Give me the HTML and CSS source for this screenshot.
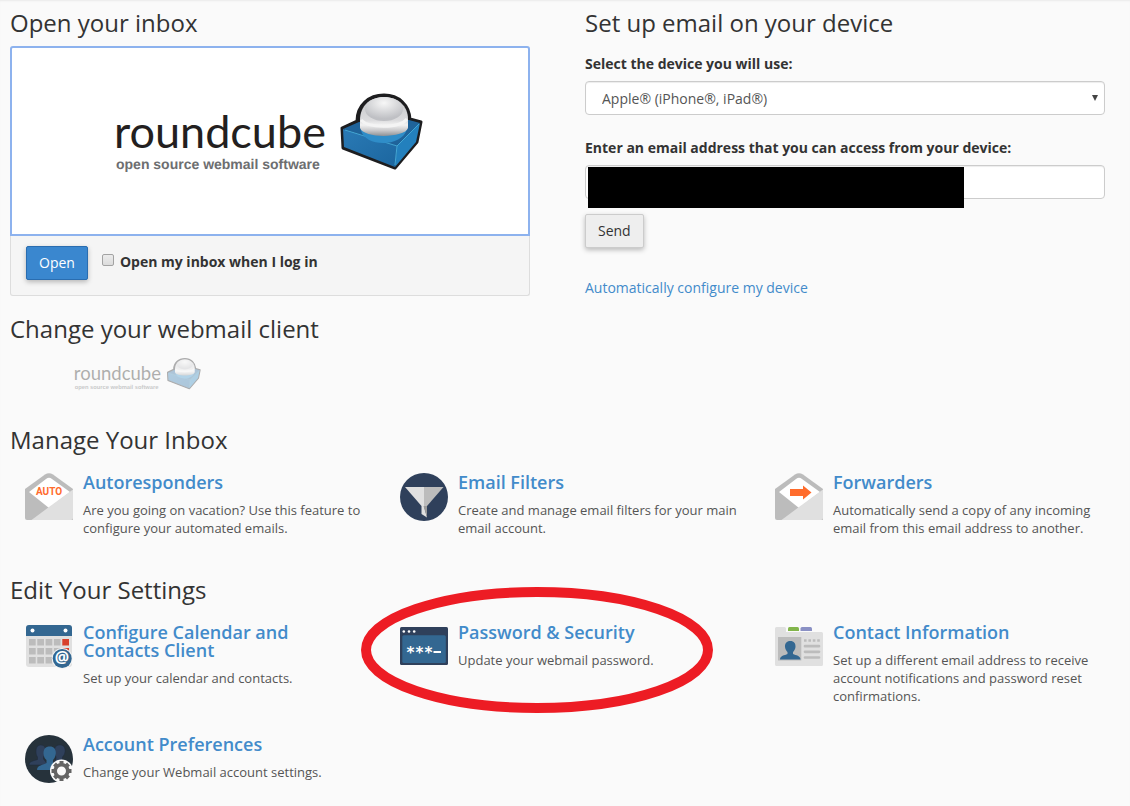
FILE: index.html
```html
<!DOCTYPE html>
<html lang="en">
<head>
    <meta charset="utf-8">
    <title>Webmail</title>
    <link rel="stylesheet" href="styles.css">
</head>
<body>

<div class="page">
    <div class="top">
        <section>
            <h2>Open your inbox</h2>
            <div class="client">
                <button class="client-logo" type="button" aria-label="Roundcube">
                    <svg width="320" height="90" viewBox="0 0 320 90">
                        <defs>
                            <linearGradient id="ballShade" x1="0" y1="0" x2="0" y2="1">
                                <stop offset="0" stop-color="#c4c5c7"/>
                                <stop offset="0.6" stop-color="#dcdcde"/>
                                <stop offset="0.72" stop-color="#f2f2f2"/>
                                <stop offset="0.86" stop-color="#c9c9cb"/>
                                <stop offset="1" stop-color="#8f9296"/>
                            </linearGradient>
                            <radialGradient id="ballTop" cx="0.5" cy="0.25" r="0.65">
                                <stop offset="0" stop-color="#f7f7f7"/>
                                <stop offset="1" stop-color="#bfc0c4"/>
                            </radialGradient>
                            <linearGradient id="cubeSide" x1="0" y1="0" x2="1" y2="1">
                                <stop offset="0" stop-color="#2a7ab5"/>
                                <stop offset="1" stop-color="#1c669f"/>
                            </linearGradient>
                        </defs>
                        <g id="roundcube">
                            <text class="logo-name" x="4" y="62">roundcube</text>
                            <text class="logo-tagline" x="6" y="83">open source webmail software</text>
                            <path d="M232 42L247 35C247 19 259 9 274 9S299 19 300 33L311 36L307 56L285 82L233 62Z" fill="#1d1d1f" stroke="#1d1d1f" stroke-width="3" stroke-linejoin="round"/>
                            <path d="M233 43L249 36L299 34L310 37L287 60Z" fill="#1f639a"/>
                            <path d="M233 43L287 60L285 81L234 61Z" fill="url(#cubeSide)"/>
                            <path d="M287 60L310 37L306 56L285 81Z" fill="#2380bd"/>
                            <path d="M235 44L287 60L309 38M287 60L285 79" fill="none" stroke="#43a6d4" stroke-width="1"/>
                            <path d="M251 44C254 61 292 62 297 43Z" fill="#2f8dc8"/>
                            <path d="M250 34C250 20 260 11 274 11S298 20 298 33L298 42C295 52 254 53 250 42Z" fill="url(#ballShade)"/>
                            <ellipse cx="274" cy="23" rx="19" ry="12" fill="url(#ballTop)"/>
                            <path d="M251 34C258 42 289 43 297 33" fill="none" stroke="#f4f4f4" stroke-width="3"/>
                        </g>
                    </svg>
                </button>
                <div class="client-actions">
                    <button class="btn btn-primary" type="button">Open</button>
                    <input type="checkbox" id="autoOpen">
                    <label for="autoOpen">Open my inbox when I log in</label>
                </div>
            </div>

            <h2>Change your webmail client</h2>
            <div class="client-choice">
                <svg width="132" height="37" viewBox="0 0 320 90"><use href="#roundcube"/></svg>
            </div>
        </section>

        <section>
            <h2>Set up email on your device</h2>
            <form class="device-form">
                <label for="device">Select the device you will use:</label>
                <div class="select-wrap">
                    <select id="device">
                        <option>Apple® (iPhone®, iPad®)</option>
                    </select>
                </div>
                <label for="email">Enter an email address that you can access from your device:</label>
                <div class="email-wrap">
                    <input type="text" id="email">
                    <span class="redacted"></span>
                </div>
                <button class="btn" type="button">Send</button>
            </form>
            <a href="#">Automatically configure my device</a>
        </section>
    </div>

    <h2>Manage Your Inbox</h2>
    <div class="items">
        <div class="item">
            <svg class="icon" viewBox="0 0 48 48">
                <path d="M0 16L20 1.500Q24 -1 28 1.500L48 16V47H2Q0 47 0 45Z" fill="#bcbcbc"/>
                <path d="M4 19L21 6Q24 3.500 27 6L45 19L24 35Z" fill="#fff"/>
                <path d="M48 16.500V45Q48 47 46 47H6.500L24 34Z" fill="#e0e0e0"/>
                <text class="icon-auto" x="24" y="22" text-anchor="middle">AUTO</text>
            </svg>
            <div>
                <h3><a href="#">Autoresponders</a></h3>
                <p>Are you going on vacation? Use this feature to configure your automated emails.</p>
            </div>
        </div>
        <div class="item">
            <svg class="icon" viewBox="0 0 48 48">
                <circle cx="24" cy="24" r="24" fill="#2f405b"/>
                <path d="M5 14H24V33H21.500Z" fill="#e0e0e0"/>
                <path d="M43.500 14H24V33H27Z" fill="#bcbcbc"/>
                <path d="M21.500 33H24L27 44.500L21.500 41Z" fill="#e0e0e0"/>
                <path d="M23.500 33H27V44.500Z" fill="#9a9a9a"/>
            </svg>
            <div>
                <h3><a href="#">Email Filters</a></h3>
                <p>Create and manage email filters for your main email account.</p>
            </div>
        </div>
        <div class="item">
            <svg class="icon" viewBox="0 0 48 48">
                <path d="M0 16L20 1.500Q24 -1 28 1.500L48 16V47H2Q0 47 0 45Z" fill="#bcbcbc"/>
                <path d="M4 19L21 6Q24 3.500 27 6L45 19L24 35Z" fill="#fff"/>
                <path d="M48 16.500V45Q48 47 46 47H6.500L24 34Z" fill="#e0e0e0"/>
                <path d="M15 16H28V12.500L36.500 19.500L28 26.500V23H15Z" fill="#ff6c2c"/>
            </svg>
            <div>
                <h3><a href="#">Forwarders</a></h3>
                <p>Automatically send a copy of any incoming email from this email address to another.</p>
            </div>
        </div>
    </div>

    <h2>Edit Your Settings</h2>
    <div class="items">
        <div class="item">
            <svg class="icon" viewBox="0 0 48 48">
                <rect x="1" y="2" width="46" height="42" rx="3" fill="#e0e0e0"/>
                <path d="M1 13V5Q1 2 4 2H44Q47 2 47 5V13Z" fill="#336791"/>
                <circle cx="7.500" cy="7.500" r="2" fill="#fff"/>
                <circle cx="40.500" cy="7.500" r="2" fill="#fff"/>
                <path d="M4 19.300H36M4 28.300H36M4 37.300H36" stroke="#bcbcbc" stroke-width="6.500" stroke-dasharray="6.700 1.600"/>
                <path d="M37.300 16H44V22.500H37.300ZM37.300 25H44V31H37.300Z" fill="#d8402c"/>
                <circle cx="37.200" cy="35.500" r="10.500" fill="#f4f4f4"/>
                <circle cx="37.200" cy="35.500" r="9.500" fill="#336791"/>
                <text class="icon-at" x="37" y="40" text-anchor="middle">@</text>
            </svg>
            <div>
                <h3><a href="#">Configure Calendar and Contacts Client</a></h3>
                <p>Set up your calendar and contacts.</p>
            </div>
        </div>
        <div class="item">
            <svg class="icon" viewBox="0 0 48 48">
                <rect y="4" width="48" height="38" rx="1.500" fill="#2f405b"/>
                <rect x="2.300" y="12.300" width="43.500" height="27.700" rx="1.500" fill="#336791"/>
                <g fill="#fff">
                    <circle cx="3.800" cy="8.500" r="1.300"/>
                    <circle cx="9" cy="8.500" r="1.300"/>
                    <circle cx="14.200" cy="8.500" r="1.300"/>
                    <rect x="33.500" y="28" width="7.500" height="2"/>
                </g>
                <text class="icon-stars" x="6" y="35">***</text>
            </svg>
            <div>
                <h3><a href="#">Password &amp; Security</a></h3>
                <p>Update your webmail password.</p>
            </div>
            <svg class="highlight" width="352" height="126">
                <ellipse cx="176" cy="63" rx="171" ry="58" fill="none" stroke="#ed1c24" stroke-width="10"/>
            </svg>
        </div>
        <div class="item">
            <svg class="icon" viewBox="0 0 48 48">
                <path d="M13 8V5.500Q13 4 14.500 4H22.500Q24 4 24 5.500V8Z" fill="#82b54b"/>
                <path d="M25.500 8V5.500Q25.500 4 27 4H35.500Q37 4 37 5.500V8Z" fill="#8a90c4"/>
                <path d="M0 5.500Q0 4 1.500 4H9.500Q11 4 11 5.500V9H46.500Q48 9 48 10.500V41.500Q48 43 46.500 43H1.500Q0 43 0 41.500Z" fill="#e0e0e0"/>
                <rect x="3" y="14" width="23.300" height="23.500" fill="#bcbcbc"/>
                <path d="M15.300 18C19 18 20.800 20.500 20.500 24C20.200 26.500 19 28 18 29V31C21 32.500 25.500 32.500 25.500 36.500H5C5 32.500 9.500 32.500 12.500 31V29C11.500 28 10.300 26.500 10 24C9.800 20.500 11.600 18 15.300 18Z" fill="#336791"/>
                <path d="M29 17.500H45" stroke="#bcbcbc" stroke-width="2.700" stroke-dasharray="2.600 1.800"/>
                <path d="M30 23.200H44M30 28.800H44M30 34.500H44" stroke="#bcbcbc" stroke-width="2.700" stroke-linecap="round"/>
            </svg>
            <div>
                <h3><a href="#">Contact Information</a></h3>
                <p>Set up a different email address to receive account notifications and password reset confirmations.</p>
            </div>
        </div>
        <div class="item">
            <svg class="icon" viewBox="0 0 48 48">
                <circle cx="24" cy="24" r="24" fill="#26323b"/>
                <g fill="#2f405b" stroke="#1e2b3b" stroke-width="0.500">
                    <path d="M16 10C20 10 21 14 20.500 17C20 20 19 21 18.500 22V24L23 30H4C4 26 9 26 12.500 24.500V22C11 20 11 18 11 16C11 12 13 10 16 10Z"/>
                    <path d="M35 10C39 10 40.500 13 40 17C39.700 20 38 21 37.500 22V24.500C40 26 44 26 44 30H27L31 24V22C30 20 29.500 18 29.500 16C29.500 12 31 10 35 10Z"/>
                </g>
                <path d="M24.800 11.500C29 11.500 31 14.500 30.800 18.500C30.500 22 29 24 28 25V28C31 30 37 30 37 35H12C12 30 18.500 30 21.500 28V25C20 24 18.800 22 18.500 18.500C18.500 14 20.500 11.500 24.800 11.500Z" fill="#336791"/>
                <circle cx="36.500" cy="36" r="11.500" fill="#fafafa"/>
                <circle cx="36.500" cy="36" r="6.300" fill="none" stroke="#646464" stroke-width="3.600"/>
                <g stroke="#646464" stroke-width="4">
                    <path d="M36.500 26V29.500M36.500 42.500V46M26.500 36H30M43 36H46.500"/>
                    <path d="M29.500 29L32 31.500M41 40.500L43.500 43M43.500 29L41 31.500M32 40.500L29.500 43"/>
                </g>
            </svg>
            <div>
                <h3><a href="#">Account Preferences</a></h3>
                <p>Change your Webmail account settings.</p>
            </div>
        </div>
    </div>
</div>

</body>
</html>
```

FILE: styles.css
```css
* {
    box-sizing: border-box;
}
body {
    margin: 0;
    font-family: "Open Sans", sans-serif;
    font-size: 14px;
    line-height: 20px;
    color: #333;
    background-color: #fafafa;
    box-shadow: inset 0 2px 2px -1px #eaeaea;
}
.page {
    padding: 10px 10px 0;
}
h2 {
    margin: 0 0 10px;
    font-size: 24px;
    font-weight: 400;
    line-height: 26px;
}
a {
    color: #428bca;
    text-decoration: none;
}
a:hover {
    text-decoration: underline;
}
label {
    font-weight: 700;
}
.top {
    display: grid;
    grid-template-columns: 1fr 1fr;
    gap: 55px;
    margin-right: 15px;
}

/* Inbox box */
.client {
    margin-bottom: 20px;
    background-color: #f5f5f5;
    border-radius: 3px;
}
.client-logo {
    display: block;
    width: 100%;
    padding: 38px 0 58px;
    background: #fff;
    border: 2px solid #8db2ee;
    border-radius: 3px 3px 0 0;
    cursor: pointer;
}
.client-logo svg {
    display: block;
    margin: 0 auto;
}
.client-actions {
    display: flex;
    align-items: flex-start;
    padding: 10px 15px 15px;
    border: 1px solid #ddd;
    border-top: 0;
    border-radius: 0 0 3px 3px;
}
.client-actions input {
    appearance: none;
    width: 12px;
    height: 12px;
    margin: 8px 6px 0 14px;
    border: 1px solid #a3a3a3;
    border-radius: 2px;
    background: linear-gradient(#ececec, #dcdcdc);
}
.client-actions label {
    margin-top: 6px;
}
.client-choice {
    max-width: 255px;
    padding: 3px 0 35px;
    opacity: 0.35;
}
.client-choice svg {
    display: block;
    margin: 0 auto;
}
.logo-name {
    font-family: Lato, sans-serif;
    font-size: 45px;
    fill: #231f20;
}
.logo-tagline {
    font-family: "Liberation Sans", Arial, sans-serif;
    font-size: 14px;
    font-weight: bold;
    fill: #6d6e70;
    text-rendering: geometricPrecision;
}

/* Buttons */
.btn {
    height: 34px;
    padding: 0 12px;
    font: inherit;
    color: #333;
    background-color: #eee;
    border: 1px solid #ccc;
    border-radius: 2px;
    box-shadow: 0 2px 5px rgba(0, 0, 0, 0.26);
    cursor: pointer;
}
.btn-primary {
    color: #fff;
    background-color: #3a87cf;
    border-color: #2a6db0;
}
.client-actions .btn {
    margin-bottom: 0;
}

/* Device form */
.device-form {
    padding-top: 8px;
    margin-bottom: 30px;
}
.device-form label {
    display: block;
    margin-bottom: 7px;
}
.select-wrap, .email-wrap {
    position: relative;
    margin-bottom: 23px;
}
.email-wrap {
    margin-bottom: 15px;
}
.device-form select, .device-form input {
    appearance: none;
    display: block;
    width: 100%;
    height: 34px;
    padding: 2px 16px 0;
    font: inherit;
    color: #555;
    background-color: #fff;
    border: 1px solid #ccc;
    border-radius: 4px;
    box-shadow: inset 0 1px 1px rgba(0, 0, 0, 0.075);
}
.select-wrap::after {
    content: "";
    position: absolute;
    top: 14px;
    right: 7px;
    border: 3px solid transparent;
    border-top: 6px solid #444;
    border-bottom: 0;
}
.redacted {
    position: absolute;
    top: 2px;
    left: 3px;
    width: 376px;
    height: 41px;
    background-color: #000;
}

/* Item lists */
.items {
    display: grid;
    grid-template-columns: repeat(3, 1fr);
    gap: 30px 35px;
    padding: 10px 5px 40px 15px;
}
.item {
    position: relative;
    display: flex;
    align-items: flex-start;
    gap: 10px;
}
.icon {
    flex: none;
    width: 48px;
    height: 48px;
}
.item h3 {
    margin: 0 0 10px;
    font-size: 18px;
    font-weight: 600;
    line-height: 18px;
}
.item p {
    margin: 0;
    font-size: 13px;
    line-height: 18px;
    color: #555;
}
.icon-auto {
    font-family: Roboto, sans-serif;
    font-size: 10px;
    font-weight: 700;
    fill: #ff6c2c;
}
.icon-at {
    font-size: 16px;
    font-weight: 700;
    fill: #fff;
}
.icon-stars {
    font-family: "DejaVu Sans Mono", monospace;
    font-size: 15px;
    font-weight: bold;
    fill: #fff;
}
.highlight {
    position: absolute;
    top: -36px;
    left: -39px;
    pointer-events: none;
}
```
